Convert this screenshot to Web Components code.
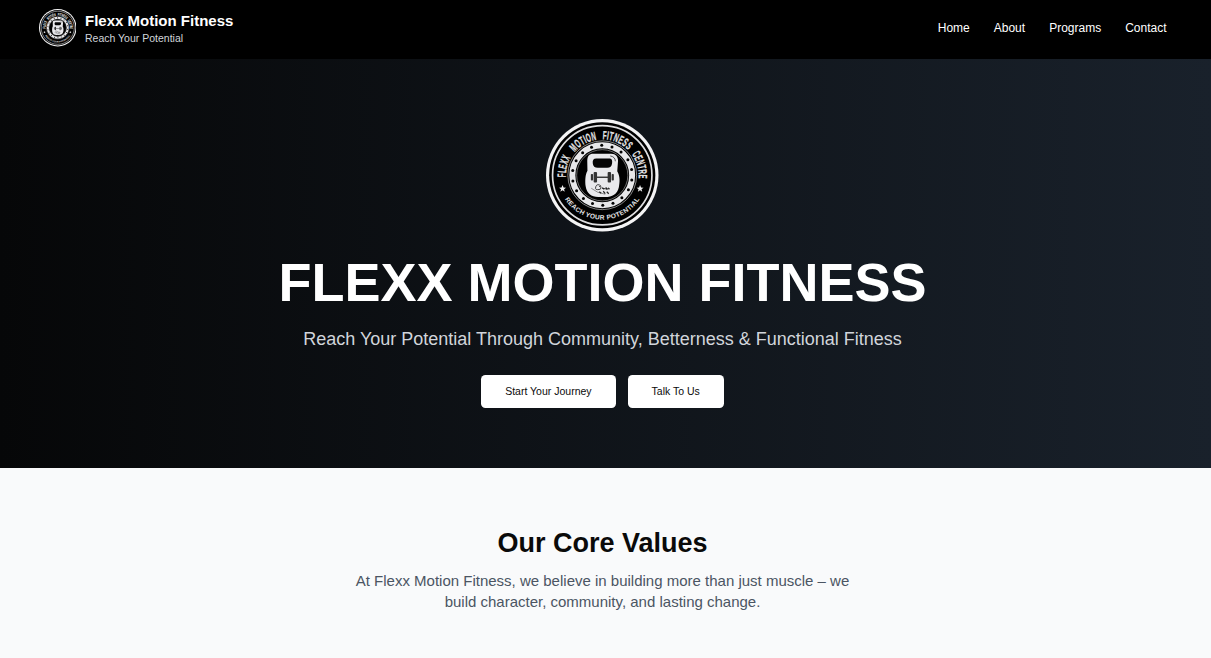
<!DOCTYPE html>
<html lang="en">
<head>
<meta charset="utf-8">
<title>Flexx Motion Fitness</title>
<style>
html{overflow:hidden}
body{margin:0;background:#f9fafb;font-family:"Liberation Sans",Arial,sans-serif;color:#0a0a0a}
</style>
</head>
<body>
<flexx-page>
  <site-header>
    <nav-link>Home</nav-link><nav-link>About</nav-link><nav-link>Programs</nav-link><nav-link>Contact</nav-link>
  </site-header>
  <hero-banner>
    <span slot="title">FLEXX MOTION FITNESS</span>
    <span slot="tagline">Reach Your Potential Through Community, Betterness &amp; Functional Fitness</span>
    <action-button>Start Your Journey</action-button>
    <action-button>Talk To Us</action-button>
  </hero-banner>
  <core-values>
    <span slot="title">Our Core Values</span>
    At Flexx Motion Fitness, we believe in building more than just muscle – we build character, community, and lasting change.
  </core-values>
</flexx-page>
<script>
const define = (name, html) => customElements.define(name, class extends HTMLElement {
  constructor() {
    super();
    this.attachShadow({ mode: 'open' }).innerHTML = html;
  }
});

define('flexx-page', `<style>:host{display:flex;flex-direction:column;min-height:658px}</style><slot></slot>`);

const dots = Array.from({ length: 18 }, (_, i) => {
  const a = (i * 20 - 91) * Math.PI / 180;
  return `<circle cx="${(29.9 * Math.cos(a)).toFixed(2)}" cy="${(29.9 * Math.sin(a)).toFixed(2)}" r="1.5"/>`;
}).join('');

// Words of the upper arc: text, offset along the arc, drawn length.
const arcWords = [['FLEXX', 1.2, 20.5], ['MOTION', 28.2, 26], ['FITNESS', 60, 28.6], ['CENTRE', 93.8, 26]]
  .map(([word, offset, length]) => `<text class="arc"><textPath href="#top" startOffset="${offset}" textLength="${length}" lengthAdjust="spacingAndGlyphs">${word}</textPath></text>`)
  .join('');

define('club-badge', `<style>
:host{display:block;width:112.5px;height:112.5px;flex:none}
svg{display:block;width:100%;height:100%}
text{font-family:"Liberation Sans",Arial,sans-serif;fill:#e4e4e6}
.arc{font-size:12px;font-weight:700;letter-spacing:.5px;stroke:#e4e4e6;stroke-width:.25px}
.foot{font-size:6.6px;font-weight:700;letter-spacing:.3px}
</style>
<svg viewBox="-56.25 -56.25 112.5 112.5" aria-hidden="true">
  <defs>
    <path id="top" d="M-36.3 3.2A36.4 36.4 0 1 1 36.3 3.2L36 9"/>
    <path id="bottom" d="M-37.3 24.1A44.4 44.4 0 0 0 38.1 22.8"/>
    <path id="star" d="M0-3.6 1-1.1 3.5-1 1.5.7 2.2 3.1 0 1.7-2.2 3.1-1.5.7-3.5-1-1-1.1Z"/>
  </defs>
  <circle r="56.25" fill="#f4f4f5"/>
  <circle r="53.1" fill="#000"/>
  <circle r="49.7" fill="none" stroke="#dedee0" stroke-width="1.7"/>
  ${arcWords}
  <text class="foot"><textPath href="#bottom" textLength="88.5" lengthAdjust="spacingAndGlyphs">REACH YOUR POTENTIAL</textPath></text>
  <use href="#star" x="-39.7" y="13.4" fill="#eee"/>
  <use href="#star" x="37.8" y="13.4" fill="#eee"/>
  <circle r="34.4" fill="none" stroke="#aaa" stroke-width=".8"/>
  <circle r="29.9" fill="none" stroke="#e8e8ea" stroke-width="6"/>
  <g fill="#050505">${dots}</g>
  <circle r="25.6" fill="none" stroke="#999" stroke-width=".7"/>
  <path d="M-9-21.5H9C13.5-21.5 15.8-18.5 15.8-14.5L15-4C18 1 17.6 7 16.6 12C15 19 10 21.8 3 21.8H-4C-11 21.8-15.5 18-16.6 11C-17.3 6-17-1-14.8-4.5L-15-14.5C-15-19-13-21.5-9-21.5Z" fill="#e9e9ec"/>
  <path d="M-6-16.7H7C9.8-16.7 10.3-14.5 9.8-11.8C9.3-8.6 8-7.5 5-7.5H-4.5C-7.5-7.5-9.2-9-9.5-12C-9.8-15-8.8-16.7-6-16.7Z" fill="#050505"/>
  <path d="M8-19.3Q13-18.5 13.1-14" fill="none" stroke="#333" stroke-width=".8"/>
  <g fill="#333">
    <rect x="-7" y="1.3" width="14" height="1.4"/>
    <rect x="-8.6" y="-3.2" width="3.4" height="10.4" rx="1"/>
    <rect x="5.4" y="-3.2" width="3.4" height="10.4" rx="1"/>
    <rect x="-11.4" y="-1.2" width="2.2" height="6.4" rx=".8"/>
    <rect x="9.4" y="-1.2" width="2.2" height="6.4" rx=".8"/>
  </g>
  <path d="M-1 11Q-5 7.5-6.5 11.5T-2 14Q0 11-3.2 11.2M0 13Q4 14 7 13.5" fill="none" stroke="#333" stroke-width=".9"/>
  <path d="M-11 13Q-5 18 3 19" fill="none" stroke="#666" stroke-width=".7"/>
  <path d="M0 12.5 2 14M3.5 12.2 5 14.3M6 12.5 7.2 14M-3 16.5-1 18M1 16 3 18.3M4.5 16.5 6.5 18.5" stroke="#222" stroke-width="1.2"/>
</svg>`);

define('nav-link', `<style>:host{display:block;font-size:12px;line-height:18px;color:#fff}a{color:inherit}</style><a><slot></slot></a>`);

define('site-header', `<style>
:host{display:block;background:#000;color:#fff;height:59px;padding-right:6px;box-sizing:border-box}
.bar{max-width:1152px;margin:0 auto;padding:9px 12px;box-sizing:border-box;display:flex;justify-content:space-between;align-items:center}
.brand{display:flex;align-items:center;gap:9px}
club-badge{width:37.5px;height:37.5px}
strong{display:block;font-size:15px;line-height:21px}
small{display:block;font-size:10.5px;line-height:15px;color:#d1d5db}
nav{display:flex;gap:24px}
</style>
<div class="bar"><div class="brand"><club-badge></club-badge><div><strong>Flexx Motion Fitness</strong><small>Reach Your Potential</small></div></div><nav><slot></slot></nav></div>`);

define('action-button', `<style>
:host{display:block}
button{display:block;height:33px;padding:0 24px;border:0;border-radius:4.5px;background:#fff;color:#0a0a0a;font:500 10.5px/15px "Liberation Sans",Arial,sans-serif}
</style><button><slot></slot></button>`);

define('hero-banner', `<style>
:host{display:flex;flex-direction:column;align-items:center;box-sizing:border-box;height:409px;padding:60px 6px 60px 0;background:linear-gradient(90deg,#060708 0%,#19212b 100%);text-align:center}
h1{margin:23px 0 0;font-size:54px;line-height:54px;color:#fff}
p{margin:18px 0 0;font-size:18px;line-height:24px;color:#d1d5db}
.actions{display:flex;gap:12px;margin-top:24.5px}
</style>
<club-badge></club-badge><h1><slot name="title"></slot></h1><p><slot name="tagline"></slot></p><div class="actions"><slot></slot></div>`);

define('core-values', `<style>
:host{display:flex;flex-direction:column;align-items:center;flex:1;box-sizing:border-box;padding:60px 6px 0 0;background:#f9fafb;text-align:center}
h2{margin:0 0 12px;font-size:27px;line-height:30px;color:#0a0a0a}
p{margin:0;max-width:504px;font-size:15px;line-height:21px;color:#4b5563}
</style>
<h2><slot name="title"></slot></h2><p><slot></slot></p>`);
</script>
</body>
</html>
